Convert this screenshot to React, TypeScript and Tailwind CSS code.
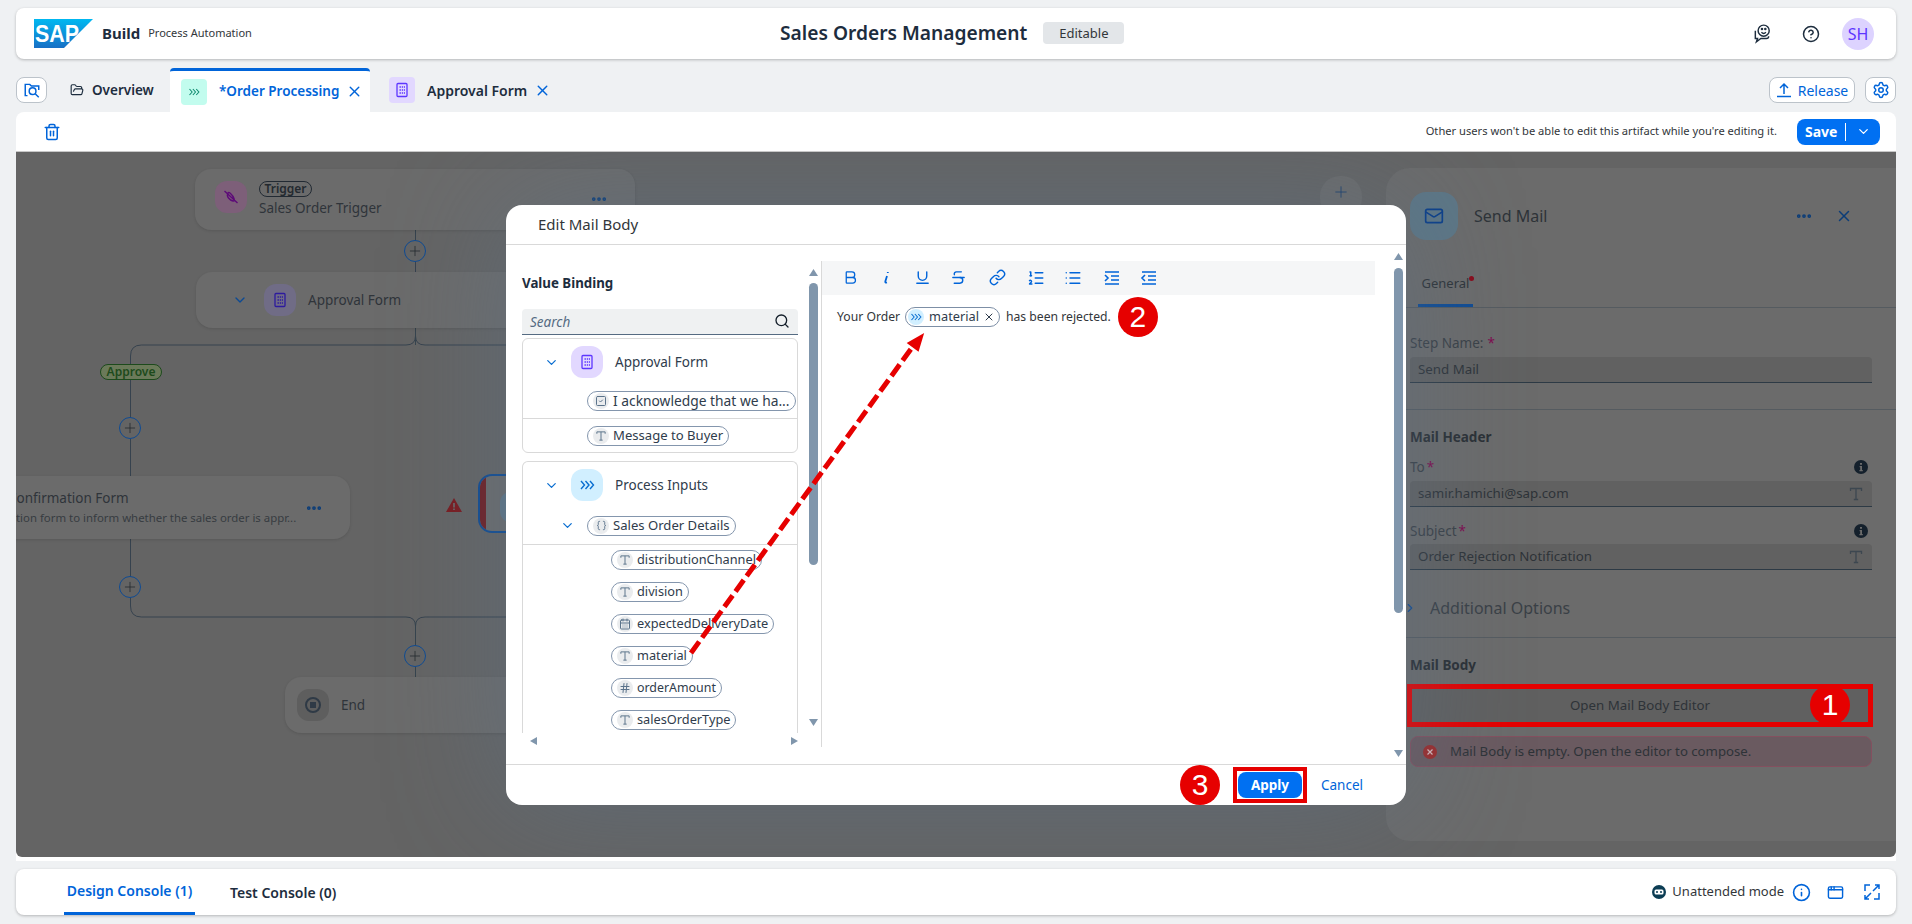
import React from "react";
import {
  AppWindow,
  Bold,
  ChevronDown,
  ChevronRight,
  CircleHelp,
  Ellipsis,
  FolderOpen,
  Hash,
  Info,
  Link,
  List,
  ListOrdered,
  Mail,
  Plus,
  Search,
  Settings,
  Strikethrough,
  Trash2,
  Underline,
  X,
  CalendarDays,
  SquareCheck,
  Braces,
} from "lucide-react";

const Chevrons = ({ className }: { className?: string }) => (
  <svg viewBox="0 0 16 16" fill="none" stroke="currentColor" strokeWidth="1.4" className={className}>
    <path d="M2 4l3.5 4L2 12M6.5 4L10 8l-3.5 4M11 4l3.5 4L11 12" />
  </svg>
);

const FormIcon = ({ className }: { className?: string }) => (
  <svg viewBox="0 0 16 16" fill="none" stroke="currentColor" strokeWidth="1.3" className={className}>
    <rect x="3" y="1.5" width="10" height="13" rx="1" />
    <path d="M5.5 5h1.4M7.8 5h1.4M10 5h1M5.5 8h1.4M7.8 8h1.4M10 8h1M5.5 11h1.4M7.8 11h1.4M10 11h1" />
  </svg>
);

const SerifT = ({ className }: { className?: string }) => (
  <svg viewBox="0 0 16 16" fill="none" stroke="currentColor" strokeWidth="1.3" className={className}>
    <path d="M2.5 5V2.5h11V5M8 2.5v11M5.8 13.5h4.4" />
  </svg>
);

const InfoDot = () => (
  <svg viewBox="0 0 14 14" className="h-[14px] w-[14px]">
    <circle cx="7" cy="7" r="7" fill="#14202c" />
    <path d="M6 3h2v1.800H6zM5.600 6h2.400v4h.8v1.200H5.400V10h.8V7.200h-.6z" fill="#6b6b6b" />
  </svg>
);

const Chip = ({ icon, label, size = "text-[12.75px]" }: { icon: React.ReactNode; label: string; size?: string }) => (
  <span className={`inline-flex h-5 shrink-0 items-center gap-1 rounded-full border border-[#8496ad] pl-[5px] pr-[5px] leading-none text-[#2f3c4c] ${size}`}>
    <span className="flex h-4 w-4 items-center justify-center rounded-full bg-[#eaecee] text-[#5b738b]">{icon}</span>
    {label}
  </span>
);

const Badge = ({ n, className }: { n: string; className?: string }) => (
  <span
    className={`flex h-10 w-10 shrink-0 items-center justify-center rounded-full bg-[#e60000] font-['Liberation_Sans',sans-serif] text-[30px] leading-none text-white ${className ?? ""}`}
  >
    {n}
  </span>
);

const ScrollArrow = ({ up }: { up?: boolean }) => (
  <svg viewBox="0 0 9 7" className="h-[7px] w-[9px] fill-[#8096ac]">
    <path d={up ? "M4.5 0L9 7H0z" : "M4.5 7L9 0H0z"} />
  </svg>
);

const PlusCircle = ({ className }: { className: string }) => (
  <span
    className={`absolute flex h-[22px] w-[22px] items-center justify-center rounded-full border border-[#0f4b93] bg-[#646464] text-[#23292f] ${className}`}
  >
    <Plus size={16} strokeWidth={1.2} />
  </span>
);

const nodeClass = "absolute rounded-2xl bg-[#6b6b6b] shadow-[0_1px_3px_rgba(0,0,0,0.12)]";

const Canvas = () => (
  <>
    <svg className="absolute left-0 top-0 h-full w-full" fill="none" stroke="#36424e" strokeWidth="1">
      <path d="M399.5 60v133M114.5 324V204q0-11 11-11H390q9.500 0 9.500-9 0 9 9.500 9H500" />
      <path d="M114.5 387v67q0 11 11 11H390q9.500 0 9.500 9v51M399.500 474q0-9 9.500-9H500" />
    </svg>

    <div className={`${nodeClass} left-[179px] top-[17px] flex h-[61px] w-[440px] items-start pl-5 pt-3`}>
      <span className="flex h-8 w-8 items-center justify-center rounded-xl bg-[#7d5f79] text-[#5d0a78]">
        <svg viewBox="0 0 16 16" fill="none" stroke="currentColor" strokeWidth="1.4" className="h-4 w-4">
          <path d="M1.500 2l13 12M5 4.500q-1.500 2 .5 4.500t4.500 3q2 .2 1-2.500T7.500 4.500 5 4.500z" />
        </svg>
      </span>
      <div className="ml-3">
        <span className="flex h-4 w-[53px] items-center justify-center rounded-full border border-[#222a33] text-[12px] font-semibold leading-none text-[#23292f]">
          Trigger
        </span>
        <div className="mt-[1px] text-[13.5px] leading-5 text-[#2f343a]">Sales Order Trigger</div>
      </div>
      <Ellipsis size={18} strokeWidth={3} className="absolute right-[27px] top-[21px] text-[#0c3d78]" />
    </div>

    <div className="absolute left-[1304px] top-6 flex h-[42px] w-[42px] justify-center rounded-[20px] bg-[#6b6b6b] pt-[7px] text-[#1c3f6b]">
      <Plus size={18} strokeWidth={1.2} />
    </div>

    <PlusCircle className="left-[388px] top-[88px]" />

    <div className={`${nodeClass} left-[180px] top-[120px] flex h-[56px] w-[450px] items-center pl-9`}>
      <ChevronDown size={16} className="text-[#0c4a94]" />
      <span className="ml-[16px] flex h-8 w-8 items-center justify-center rounded-xl bg-[#706c86] text-[#2d1a9e]">
        <FormIcon className="h-4 w-4" />
      </span>
      <span className="ml-3 text-[13.5px] text-[#2f343a]">Approval Form</span>
    </div>

    <span className="absolute left-[84px] top-[212px] flex h-4 w-[62px] items-center justify-center rounded-full border border-[#1d4a1c] bg-[#6b7a5a] text-[12px] font-semibold leading-none text-[#1d4a1c]">
      Approve
    </span>
    <PlusCircle className="left-[103px] top-[265px]" />

    <div className={`${nodeClass} left-[-100px] top-[324px] h-[63px] w-[434px] overflow-hidden pl-[92px] pt-[12px]`}>
      <div className="text-[13.5px] leading-5 text-[#2f343a]">Confirmation Form</div>
      <div className="ml-[8px] whitespace-nowrap text-[11.4px] leading-5 text-[#373c41]">
        tion form to inform whether the sales order is appr...
      </div>
      <Ellipsis size={18} strokeWidth={3} className="absolute right-[27px] top-[23px] text-[#0c3d78]" />
    </div>

    <svg viewBox="0 0 16 14" className="absolute left-[430px] top-[346px] h-[14px] w-4">
      <path d="M8 0l8 14H0z" fill="#7a1a1e" />
      <path d="M7.200 5h1.600v4.500H7.200zM7.200 10.500h1.600V12H7.200z" fill="#6b6b6b" />
    </svg>
    <div className="absolute left-[462px] top-[322px] h-[59px] w-[100px] overflow-hidden rounded-[14px] border-2 border-[#0f4b93] bg-[#6b6b6b]">
      <div className="h-full w-[6px] bg-[#6f1d22]" />
      <span className="absolute left-[20px] top-[15px] h-8 w-8 rounded-xl bg-[#5f7585]" />
    </div>

    <PlusCircle className="left-[103px] top-[424px]" />
    <PlusCircle className="left-[388px] top-[493px]" />

    <div className={`${nodeClass} left-[269px] top-[525px] flex h-[56px] w-[300px] items-center pl-3`}>
      <span className="flex h-8 w-8 items-center justify-center rounded-xl bg-[#5e5e5e]">
        <span className="flex h-4 w-4 items-center justify-center rounded-full border-2 border-[#2f3a46]">
          <span className="h-[6px] w-[6px] bg-[#2f3a46]" />
        </span>
      </span>
      <span className="ml-3 text-[13.5px] text-[#2f343a]">End</span>
    </div>
  </>
);

const SidePanel = () => (
  <div className="absolute bottom-4 left-[1370px] right-0 top-4 flex flex-col rounded-l-[24px] bg-[#6b6b6b] text-[#2e3338]">
    <div className="flex h-[72px] items-end px-6">
      <span className="flex h-12 w-12 items-center justify-center rounded-2xl bg-[#5d7685] text-[#0a3f8a]">
        <Mail size={20} />
      </span>
      <span className="mb-[12px] ml-4 text-[16px]">Send Mail</span>
      <Ellipsis size={18} strokeWidth={3} className="mb-[15px] ml-auto mr-[2px] text-[#0c3d78]" />
      <X size={18} className="mb-[15px] ml-5 mr-[19px] text-[#0c3d78]" />
    </div>
    <div className="flex h-[68px] items-end border-b border-[#555b60] pl-8">
      <div className="relative flex h-[33px] w-[55px] justify-center border-b-[3px] border-[#0f4b93] text-[13px]">
        General
        <span className="absolute right-[-1px] top-[2px] h-[5px] w-[5px] rounded-full bg-[#8a0a1a]" />
      </div>
    </div>
    <div className="flex h-[102px] flex-col border-b border-[#555b60] px-6 pt-[25px]">
      <label className="h-5 text-[13.5px] leading-5 text-[#3a4046]">
        Step Name:<span className="ml-1 text-[#7e0a4e]">*</span>
      </label>
      <div className="mt-[4px] flex h-[26px] items-center rounded-t border-b border-[#2d3a45] bg-[#616161] px-2 text-[13.3px]">
        Send Mail
      </div>
    </div>
    <div className="flex h-[228px] flex-col border-b border-[#555b60] px-6 pt-[17px]">
      <div className="h-5 text-[13.5px] font-bold leading-5 text-[#2a2f34]">Mail Header</div>
      <label className="mt-[10px] flex h-5 items-center justify-between pr-1 text-[13.5px] text-[#3a4046]">
        <span>
          To<span className="ml-[2px] text-[#7e0a4e]">*</span>
        </span>
        <InfoDot />
      </label>
      <div className="mt-[4px] flex h-[26px] items-center justify-between rounded-t border-b border-[#2d3a45] bg-[#616161] px-2 text-[13.3px]">
        samir.hamichi@sap.com
        <SerifT className="h-4 w-4 text-[#3d4750]" />
      </div>
      <label className="mt-[14px] flex h-5 items-center justify-between pr-1 text-[13.5px] text-[#3a4046]">
        <span>
          Subject<span className="ml-[2px] text-[#7e0a4e]">*</span>
        </span>
        <InfoDot />
      </label>
      <div className="mt-[3px] flex h-[26px] items-center justify-between rounded-t border-b border-[#2d3a45] bg-[#616161] px-2 text-[13.3px]">
        Order Rejection Notification
        <SerifT className="h-4 w-4 text-[#3d4750]" />
      </div>
      <div className="mt-[28px] flex h-5 items-center text-[16px] text-[#3a4046]">
        <ChevronRight size={14} className="-ml-[7px] mr-[13px] text-[#0f4b93]" />
        <span>Additional Options</span>
      </div>
    </div>
    <div className="flex flex-col px-6 pt-[17px]">
      <div className="h-5 text-[13.5px] font-bold leading-5 text-[#2a2f34]">Mail Body</div>
      <div className="relative -ml-[3px] -mr-px mt-[9px] flex h-[43px] items-center justify-center border-[5px] border-[#e60000] text-[13.3px]">
        <div className="flex h-full w-full items-center justify-center bg-[#606060]">Open Mail Body Editor</div>
        <Badge n="1" className="absolute right-[18px] top-[-4px]" />
      </div>
      <div className="mt-[9px] flex h-[31px] items-center rounded-lg border border-[#84505f] bg-[#6a5a60] pl-3 text-[13.2px]">
        <svg viewBox="0 0 14 14" className="h-[14px] w-[14px]" fill="none">
          <circle cx="7" cy="7" r="7" fill="#9c2b2b" />
          <path d="M4.500 4.500l5 5M9.500 4.500l-5 5" stroke="#d8b8bc" strokeWidth="1.2" />
        </svg>
        <span className="ml-[13px]">Mail Body is empty. Open the editor to compose.</span>
      </div>
    </div>
  </div>
);

const Tree = () => (
  <div className="flex flex-col">
    <div className="h-[115px] rounded-md border border-[#d9d9d9]">
      <div className="flex h-[47px] items-center pl-[21px]">
        <ChevronDown size={15} className="text-[#0a6ed1]" />
        <span className="ml-[12px] flex h-8 w-8 items-center justify-center rounded-xl bg-[#e2d8ff] text-[#5d36ff]">
          <FormIcon className="h-4 w-4" />
        </span>
        <span className="ml-3 text-[13.5px] text-[#2f3c4c]">Approval Form</span>
      </div>
      <div className="flex h-[33px] items-start border-b border-[#d9d9d9] pl-[64px] pt-[5px]">
        <Chip icon={<SquareCheck size={12} />} label="I acknowledge that we ha..." size="text-[13.8px]" />
      </div>
      <div className="pl-[64px] pt-[5px]">
        <Chip icon={<SerifT className="h-3 w-3" />} label="Message to Buyer" size="text-[13.1px]" />
      </div>
    </div>
    <div className="mt-2 h-[272px] overflow-hidden rounded-t-md border border-b-0 border-[#d9d9d9]">
      <div className="flex h-[47px] items-center pl-[21px]">
        <ChevronDown size={15} className="text-[#0a6ed1]" />
        <span className="ml-[12px] flex h-8 w-8 items-center justify-center rounded-xl bg-[#d1efff] text-[#0a6ed1]">
          <Chevrons className="h-4 w-4" />
        </span>
        <span className="ml-3 text-[13.5px] text-[#2f3c4c]">Process Inputs</span>
      </div>
      <div className="flex h-[36px] items-start border-b border-[#d9d9d9] pl-[37px] pt-[7px]">
        <ChevronDown size={15} className="mr-3 mt-[2px] text-[#0a6ed1]" />
        <Chip icon={<Braces size={11} />} label="Sales Order Details" size="text-[13.1px]" />
      </div>
      <div className="flex flex-col items-start gap-3 pl-[88px] pt-[5px]">
        <Chip icon={<SerifT className="h-3 w-3" />} label="distributionChannel" />
        <Chip icon={<SerifT className="h-3 w-3" />} label="division" />
        <Chip icon={<CalendarDays size={12} />} label="expectedDeliveryDate" />
        <Chip icon={<SerifT className="h-3 w-3" />} label="material" />
        <Chip icon={<Hash size={12} />} label="orderAmount" size="text-[12.4px]" />
        <Chip icon={<SerifT className="h-3 w-3" />} label="salesOrderType" />
      </div>
    </div>
    <div className="flex items-center justify-between pl-2 pt-[4px]">
      <span className="h-0 w-0 border-y-[4px] border-r-[7px] border-y-transparent border-r-[#8096ac]" />
      <span className="h-0 w-0 border-y-[4px] border-l-[7px] border-y-transparent border-l-[#8096ac]" />
    </div>
  </div>
);

const Dialog = () => (
  <div className="absolute left-[490px] top-[53px] flex h-[600px] w-[900px] flex-col rounded-2xl bg-white shadow-[0_0_120px_rgba(90,115,140,0.45)]">
    <div className="flex h-[40px] items-center border-b border-[#d9d9d9] pl-8 text-[15px] text-[#32363a]">Edit Mail Body</div>
    <div className="flex h-[521px]">
      <div className="ml-4 mt-4 w-[276px]">
        <div className="mt-3 h-5 text-[13.3px] font-bold leading-5 text-[#1d2d3e]">Value Binding</div>
        <div className="mb-[3px] mt-4 flex h-[26px] items-center justify-between rounded-t border-b border-[#556b82] bg-[#eff1f2] pl-2 pr-2 text-[13.5px] italic text-[#556b82]">
          <span className="mt-[2px]">Search</span>
          <Search size={16} className="text-[#131e29]" />
        </div>
        <Tree />
      </div>
      <div className="ml-[11px] mt-6 flex w-[9px] flex-col">
        <ScrollArrow up />
        <div className="mt-[7px] h-[282px] rounded-full bg-[#8096ac]" />
        <div className="mt-[154px]">
          <ScrollArrow />
        </div>
      </div>
      <div className="mb-[17px] ml-[3px] mt-4 w-[554px] border-l border-[#d9d9d9]">
        <div className="flex h-[34px] items-center gap-[19px] bg-[#f5f6f7] pl-[20px] text-[#0064d9]">
          <Bold size={17} strokeWidth={1.8} />
          <svg viewBox="0 0 17 17" fill="none" stroke="currentColor" strokeWidth="1.8" className="h-[17px] w-[17px]">
            <path d="M9.800 3v1M9 7l-1.700 5.500q-.3 1.500 1.700 1" />
          </svg>
          <Underline size={17} />
          <Strikethrough size={17} />
          <Link size={17} className="ml-[3px]" />
          <ListOrdered size={18} className="ml-[2px]" />
          <List size={18} />
          <svg viewBox="0 0 18 18" fill="none" stroke="currentColor" strokeWidth="1.6" className="ml-[2px] h-[18px] w-[18px]">
            <path d="M2 3h14M8 7h8M8 11h8M2 15h14M2 6l3 3-3 3" />
          </svg>
          <svg viewBox="0 0 18 18" fill="none" stroke="currentColor" strokeWidth="1.6" className="h-[18px] w-[18px]">
            <path d="M2 3h14M8 7h8M8 11h8M2 15h14M5 6L2 9l3 3" />
          </svg>
        </div>
        <div className="flex h-[44px] items-center pl-[15px] text-[12.2px] text-[#32363a]">
          <span>Your Order</span>
          <span className="ml-[5px] inline-flex h-5 items-center rounded-full border border-[#7d8fa6] pl-[2px] pr-1 text-[12.75px] leading-none text-[#2f3c4c]">
            <span className="flex h-4 w-4 items-center justify-center rounded-full bg-[#d1efff] text-[#0a6ed1]">
              <Chevrons className="h-3 w-3" />
            </span>
            <span className="ml-[5px]">material</span>
            <X size={12} className="ml-1" />
          </span>
          <span className="ml-[6px]">has been rejected.</span>
          <Badge n="2" className="ml-[7px]" />
        </div>
      </div>
      <div className="ml-[19px] mt-2 flex w-[9px] flex-col">
        <ScrollArrow up />
        <div className="mt-2 h-[345px] rounded-full bg-[#8096ac]" />
        <div className="mt-[137px]">
          <ScrollArrow />
        </div>
      </div>
    </div>
    <div className="flex flex-1 items-center justify-end rounded-b-2xl border-t border-[#d9d9d9] pr-[43px]">
      <Badge n="3" className="mr-[13px]" />
      <div className="border-[4px] border-[#e60000] p-[1px]">
        <button className="flex h-[26px] w-[64px] items-center justify-center rounded-lg bg-[#0070f2] text-[13.5px] font-bold text-white">
          Apply
        </button>
      </div>
      <span className="ml-[14px] text-[13.5px] text-[#0064d9]">Cancel</span>
    </div>
  </div>
);

export default function App() {
  return (
    <div className="flex h-[924px] w-[1912px] flex-col overflow-hidden bg-[#eff1f3] px-4 font-['Noto_Sans',sans-serif] text-[#1d2d3e]">
      <header className="relative mt-2 flex h-[51px] items-center rounded-lg bg-white px-[18px] shadow-[0_1px_3px_rgba(0,0,0,0.25)]">
        <svg viewBox="0 0 59 29" className="h-[29px] w-[59px]">
          <defs>
            <linearGradient id="sap" x1="0" y1="0" x2="0" y2="1">
              <stop offset="0" stopColor="#00b8f1" />
              <stop offset="1" stopColor="#1870c5" />
            </linearGradient>
          </defs>
          <path d="M0 0h59L30 29H0z" fill="url(#sap)" />
          <text x="1" y="23" fill="#fff" fontFamily="Liberation Sans" fontWeight="700" fontSize="24" textLength="44" lengthAdjust="spacingAndGlyphs">
            SAP
          </text>
        </svg>
        <span className="ml-[9px] text-[15px] font-bold">Build</span>
        <span className="ml-[8px] text-[11px] text-[#32363a]">Process Automation</span>
        <div className="absolute left-[764px] flex items-center">
          <span className="text-[19.2px] font-semibold">Sales Orders Management</span>
          <span className="ml-4 flex h-[22px] w-[81px] items-center justify-center rounded bg-[#e3e6e9] text-[13px] text-[#32363a]">Editable</span>
        </div>
        <div className="ml-auto flex items-center">
          <svg viewBox="0 0 18 18" fill="none" stroke="#1d2d3e" strokeWidth="1.3" className="h-5 w-5">
            <circle cx="10.500" cy="6" r="5" />
            <path d="M3 6v7h2l-1 3 4-3h5q2 0 2-2" />
            <path d="M8.500 7.500q2 2 4 0" />
            <circle cx="9" cy="4.500" r=".5" />
            <circle cx="12" cy="4.500" r=".5" />
          </svg>
          <CircleHelp size={18} className="ml-[30px]" />
          <span className="ml-[22px] mr-[4px] flex h-8 w-8 items-center justify-center rounded-full bg-[#ddd3ff] text-[16px] text-[#5d36ff]">SH</span>
        </div>
      </header>

      <div className="mt-[9px] flex h-[44px] items-stretch">
        <div className="mt-[9px] flex h-[26px] w-[31px] items-center justify-center rounded-lg border border-[#bcc3ca] bg-white text-[#0064d9]">
          <svg viewBox="0 0 16 16" fill="none" stroke="currentColor" strokeWidth="1.3" className="h-[18px] w-[18px]">
            <path d="M4 13H2V3h4l1.500 1.500H14V8" />
            <circle cx="8.500" cy="9" r="3" />
            <path d="M11 11.500l3 3" />
          </svg>
        </div>
        <div className="flex w-[123px] items-center pl-[23px] text-[13.5px] font-semibold">
          <FolderOpen size={14} />
          <span className="ml-[8px]">Overview</span>
        </div>
        <div className="flex w-[200px] items-center whitespace-nowrap rounded-t border-t-[3px] border-[#0064d9] bg-white pl-[11px] text-[13.5px] font-semibold text-[#0064d9]">
          <span className="flex h-[26px] w-[26px] shrink-0 items-center justify-center rounded bg-[#c2fcee] text-[#0e8a6f]">
            <Chevrons className="h-3 w-3" />
          </span>
          <span className="ml-3">*Order Processing</span>
          <X size={17} className="ml-[7px] shrink-0" />
        </div>
        <div className="flex items-center pl-[19px] text-[14px] font-semibold">
          <span className="flex h-[26px] w-[26px] items-center justify-center rounded bg-[#e2d8ff] text-[#5d36ff]">
            <FormIcon className="h-4 w-4" />
          </span>
          <span className="ml-3">Approval Form</span>
          <X size={17} className="ml-[7px] text-[#0064d9]" />
        </div>
        <div className="ml-auto mt-[9px] flex h-[26px]">
          <button className="flex w-[86px] items-center justify-center gap-[6px] rounded-lg border border-[#bcc3ca] bg-white text-[14px] text-[#0064d9]">
            <svg viewBox="0 0 16 16" fill="none" stroke="currentColor" strokeWidth="1.5" className="h-4 w-4">
              <path d="M8 12V2M4 6l4-4 4 4M1 14.500h14" />
            </svg>
            Release
          </button>
          <button className="ml-[10px] flex w-[31px] items-center justify-center rounded-lg border border-[#bcc3ca] bg-white text-[#0064d9]">
            <Settings size={18} />
          </button>
        </div>
      </div>

      <div className="flex h-[39px] items-center rounded-t-lg bg-white pl-[27px] pr-4">
        <Trash2 size={18} className="text-[#0064d9]" />
        <span className="ml-auto text-[11.15px] text-[#32363a]">Other users won't be able to edit this artifact while you're editing it.</span>
        <div className="ml-5 flex h-[26px] w-[83px] items-center rounded-lg bg-[#0070f2] text-white">
          <span className="pl-2 text-[14px] font-bold">Save</span>
          <span className="ml-2 h-[18px] w-px bg-white" />
          <ChevronDown size={15} className="ml-[10px]" />
        </div>
      </div>

      <div className="h-[710px] border-t border-[#c8c8c8] bg-white pb-1">
        <div className="relative h-[705px] overflow-hidden rounded-b-md bg-[#646464]">
          <Canvas />
          <SidePanel />
          <Dialog />
          <svg className="absolute left-0 top-0 h-full w-full" fill="none">
            <path d="M675 501L900 190" stroke="#e60000" strokeWidth="5" strokeDasharray="14 5" />
            <path d="M906.500 183l-14 8 9.500 7z" fill="#e60000" stroke="#e60000" strokeWidth="2" />
          </svg>
        </div>
      </div>

      <footer className="mt-2 flex h-[46px] items-stretch rounded-lg bg-white pl-12 pr-[15px] shadow-[0_1px_3px_rgba(0,0,0,0.25)]">
        <div className="flex w-[131px] items-center justify-center border-b-[3px] border-[#0064d9] text-[14px] font-semibold text-[#0064d9]">Design Console (1)</div>
        <div className="ml-[35px] flex items-center text-[14px] font-semibold">Test Console (0)</div>
        <div className="ml-auto flex items-center">
          <svg viewBox="0 0 14 14" className="h-[14px] w-[14px]">
            <circle cx="7" cy="7" r="7" fill="#0c3d54" />
            <rect x="2.500" y="4.500" width="9" height="5" rx="1.500" fill="#fff" />
            <circle cx="5" cy="7" r="1" fill="#0c3d54" />
            <circle cx="9" cy="7" r="1" fill="#0c3d54" />
          </svg>
          <span className="ml-[6px] text-[13px] text-[#32363a]">Unattended mode</span>
          <Info size={19} className="ml-2 text-[#0064d9]" />
          <AppWindow size={17} className="ml-4 text-[#0064d9]" />
          <svg viewBox="0 0 18 18" fill="none" stroke="#0064d9" strokeWidth="1.5" className="ml-[19px] h-[18px] w-[18px]">
            <path d="M2 8V2h5M11 16h5v-6M10 8l6-6M12 2h4v4M8 10l-6 6M2 12v4h4" />
          </svg>
        </div>
      </footer>
    </div>
  );
}
